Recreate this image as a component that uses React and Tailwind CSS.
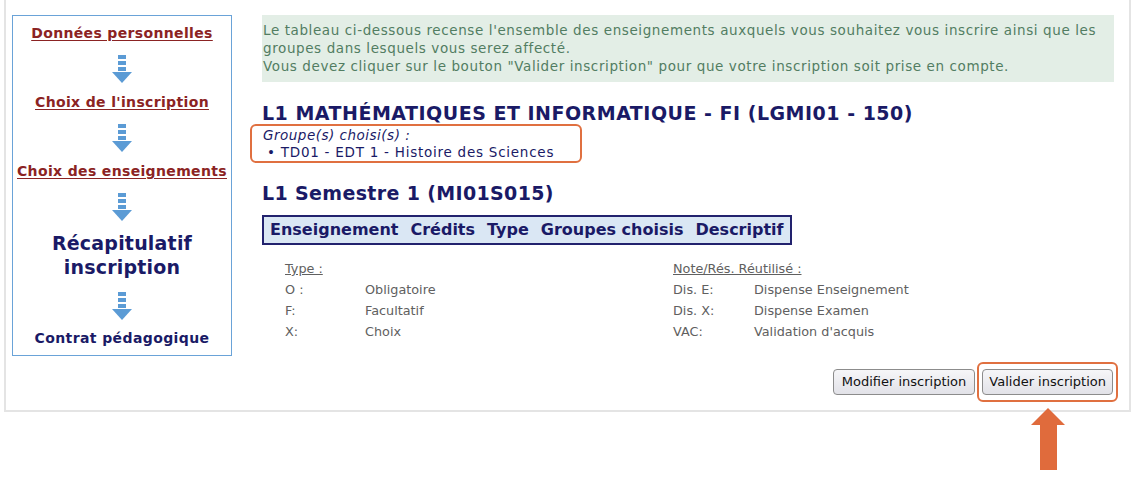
import React from 'react';

const DownArrow = () => (
  <svg width="22" height="28" viewBox="0 0 22 28" className="block">
    <rect x="7" y="0" width="8" height="4" fill="#5b9bd5" />
    <rect x="7" y="6" width="8" height="4" fill="#5b9bd5" />
    <rect x="7" y="12" width="8" height="4" fill="#5b9bd5" />
    <polygon points="1,17 21,17 11,28" fill="#5b9bd5" />
  </svg>
);

const steps = [
  { label: 'Données personnelles', link: true },
  { label: "Choix de l'inscription", link: true },
  { label: 'Choix des enseignements', link: true },
];

const typeRows = [
  ['O :', 'Obligatoire'],
  ['F:', 'Facultatif'],
  ['X:', 'Choix'],
];

const noteRows = [
  ['Dis. E:', 'Dispense Enseignement'],
  ['Dis. X:', 'Dispense Examen'],
  ['VAC:', "Validation d'acquis"],
];

const App = () => {
  return (
    <div className="w-[1133px] h-[477px] bg-white font-['DejaVu_Sans',Verdana,sans-serif] overflow-hidden">
      <div className="ml-[4px] w-[1127px] flex border-l-2 border-r-2 border-b-2 border-[#e4e4e4] pb-[8px]">
        {/* sidebar */}
        <div className="ml-[6px] mt-[15px] w-[220px] h-[341px] shrink-0 border border-[#6aa3d8] flex flex-col items-center pt-[9px] text-center">
          {steps.map((s) => (
            <React.Fragment key={s.label}>
              <a className="text-[14px] leading-[16px] tracking-[0.35px] font-bold text-[#8b2323] underline underline-offset-2 whitespace-nowrap">
                {s.label}
              </a>
              <div className="mt-[14px] mb-[11px]">
                <DownArrow />
              </div>
            </React.Fragment>
          ))}
          <div className="-mt-[1px] text-[19px] leading-[24px] tracking-[0.2px] font-bold text-[#1a1a66]">
            Récapitulatif
            <br />
            inscription
          </div>
          <div className="mt-[13px] mb-[10px]">
            <DownArrow />
          </div>
          <div className="text-[14px] leading-[16px] tracking-[0.4px] font-bold text-[#1a1a66] whitespace-nowrap">Contrat pédagogique</div>
        </div>

        {/* main */}
        <div className="ml-[30px] mr-[15px] pt-[15px] flex-1 flex flex-col">
          <div className="bg-[#e3eee6] text-[#527d62] text-[13.5px] tracking-[0.6px] leading-[18px] pt-[6px] pb-[7px] pl-[1px] pr-[4px] whitespace-nowrap">
            Le tableau ci-dessous recense l'ensemble des enseignements auxquels vous souhaitez vous inscrire ainsi que les
            <br />
            groupes dans lesquels vous serez affecté.
            <br />
            Vous devez cliquer sur le bouton "Valider inscription" pour que votre inscription soit prise en compte.
          </div>

          <h1 className="mt-[20px] text-[19px] leading-[22px] tracking-[0.5px] font-bold text-[#1a1a66] whitespace-nowrap">
            L1 MATHÉMATIQUES ET INFORMATIQUE - FI (LGMI01 - 150)
          </h1>

          <div className="-ml-[12px] w-[332px] border-2 border-[#e07040] rounded-[6px] pl-[11px] pt-[1px] text-[13.5px] tracking-[0.75px] leading-[17px] text-[#1a1a66] whitespace-nowrap">
            <div className="italic tracking-[0.5px]">Groupe(s) choisi(s) :</div>
            <div className="pl-[4px]">• TD01 - EDT 1 - Histoire des Sciences</div>
          </div>

          <h2 className="mt-[19px] text-[19px] leading-[22px] tracking-[0.35px] font-bold text-[#1a1a66]">L1 Semestre 1 (MI01S015)</h2>

          <div className="mt-[11px] self-start border-2 border-[#22226e] bg-[#dae7f4] h-[30px] px-[6px] flex items-center gap-[12px] text-[16px] font-bold text-[#1a1a66] whitespace-nowrap">
            <span>Enseignement</span>
            <span>Crédits</span>
            <span>Type</span>
            <span>Groupes choisis</span>
            <span>Descriptif</span>
          </div>

          <div className="mt-[13px] ml-[23px] flex text-[12.8px] leading-[21px] text-[#606060]">
            <div className="w-[388px]">
              <div className="underline">Type :</div>
              {typeRows.map(([c, d]) => (
                <div key={c} className="flex">
                  <span className="w-[80px]">{c}</span>
                  <span>{d}</span>
                </div>
              ))}
            </div>
            <div>
              <div className="underline">Note/Rés. Réutilisé :</div>
              {noteRows.map(([c, d]) => (
                <div key={c} className="flex">
                  <span className="w-[81px]">{c}</span>
                  <span>{d}</span>
                </div>
              ))}
            </div>
          </div>

          <div className="mt-[20px] flex justify-end items-center -mr-[4px]">
            <button className="h-[26px] px-[8px] rounded-[4px] border border-[#8c8c8c] bg-gradient-to-b from-[#f6f6f8] to-[#e2e2e8] text-[13px] text-[#111]">
              Modifier inscription
            </button>
            <div className="ml-[2px] border-2 border-[#e07040] rounded-[6px] px-[3px] py-[5px]">
              <button className="h-[26px] px-[6px] rounded-[4px] border border-[#8c8c8c] bg-gradient-to-b from-[#f6f6f8] to-[#e2e2e8] text-[13px] text-[#111] block">
                Valider inscription
              </button>
            </div>
          </div>
        </div>
      </div>

      <div className="-mt-[4px] ml-[1031px]">
        <svg width="34" height="62" viewBox="0 0 34 62" className="block">
          <polygon points="17,0 34,17 26,17 26,62 9,62 9,17 0,17" fill="#e06b3c" />
        </svg>
      </div>
    </div>
  );
};

export default App;
